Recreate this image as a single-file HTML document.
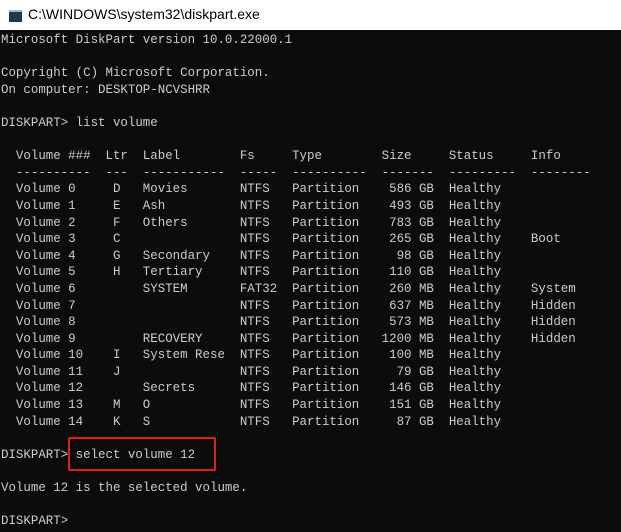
<!DOCTYPE html>
<html><head><style>
html,body{margin:0;padding:0;width:621px;height:532px;overflow:hidden;background:#0c0c0c}
.title{position:absolute;left:0;top:0;width:621px;height:30px;background:#fff;font-family:"Liberation Sans",sans-serif;font-size:14px;color:#000;}
.title span{position:absolute;left:28px;top:6px}
.icon{position:absolute;left:9px;top:10px;width:13px;height:10px;background:#1f3a4d;border-top:2px solid #9fb4c4}
pre{position:absolute;left:1px;top:32px;margin:0;font-family:"Liberation Mono",monospace;font-size:12.45px;line-height:16.6px;color:#cccccc}
.box{position:absolute;left:68px;top:437px;width:144px;height:30px;border:2.5px solid #e02020;border-radius:2px}
</style></head><body>
<div class="title"><div class="icon"></div><span>C:\WINDOWS\system32\diskpart.exe</span></div>
<pre>Microsoft DiskPart version 10.0.22000.1

Copyright (C) Microsoft Corporation.
On computer: DESKTOP-NCVSHRR

DISKPART&gt; list volume

  Volume ###  Ltr  Label        Fs     Type        Size     Status     Info
  ----------  ---  -----------  -----  ----------  -------  ---------  --------
  Volume 0     D   Movies       NTFS   Partition    586 GB  Healthy
  Volume 1     E   Ash          NTFS   Partition    493 GB  Healthy
  Volume 2     F   Others       NTFS   Partition    783 GB  Healthy
  Volume 3     C                NTFS   Partition    265 GB  Healthy    Boot
  Volume 4     G   Secondary    NTFS   Partition     98 GB  Healthy
  Volume 5     H   Tertiary     NTFS   Partition    110 GB  Healthy
  Volume 6         SYSTEM       FAT32  Partition    260 MB  Healthy    System
  Volume 7                      NTFS   Partition    637 MB  Healthy    Hidden
  Volume 8                      NTFS   Partition    573 MB  Healthy    Hidden
  Volume 9         RECOVERY     NTFS   Partition   1200 MB  Healthy    Hidden
  Volume 10    I   System Rese  NTFS   Partition    100 MB  Healthy
  Volume 11    J                NTFS   Partition     79 GB  Healthy
  Volume 12        Secrets      NTFS   Partition    146 GB  Healthy
  Volume 13    M   O            NTFS   Partition    151 GB  Healthy
  Volume 14    K   S            NTFS   Partition     87 GB  Healthy

DISKPART&gt; select volume 12

Volume 12 is the selected volume.

DISKPART&gt;</pre>
<div class="box"></div>
</body></html>
